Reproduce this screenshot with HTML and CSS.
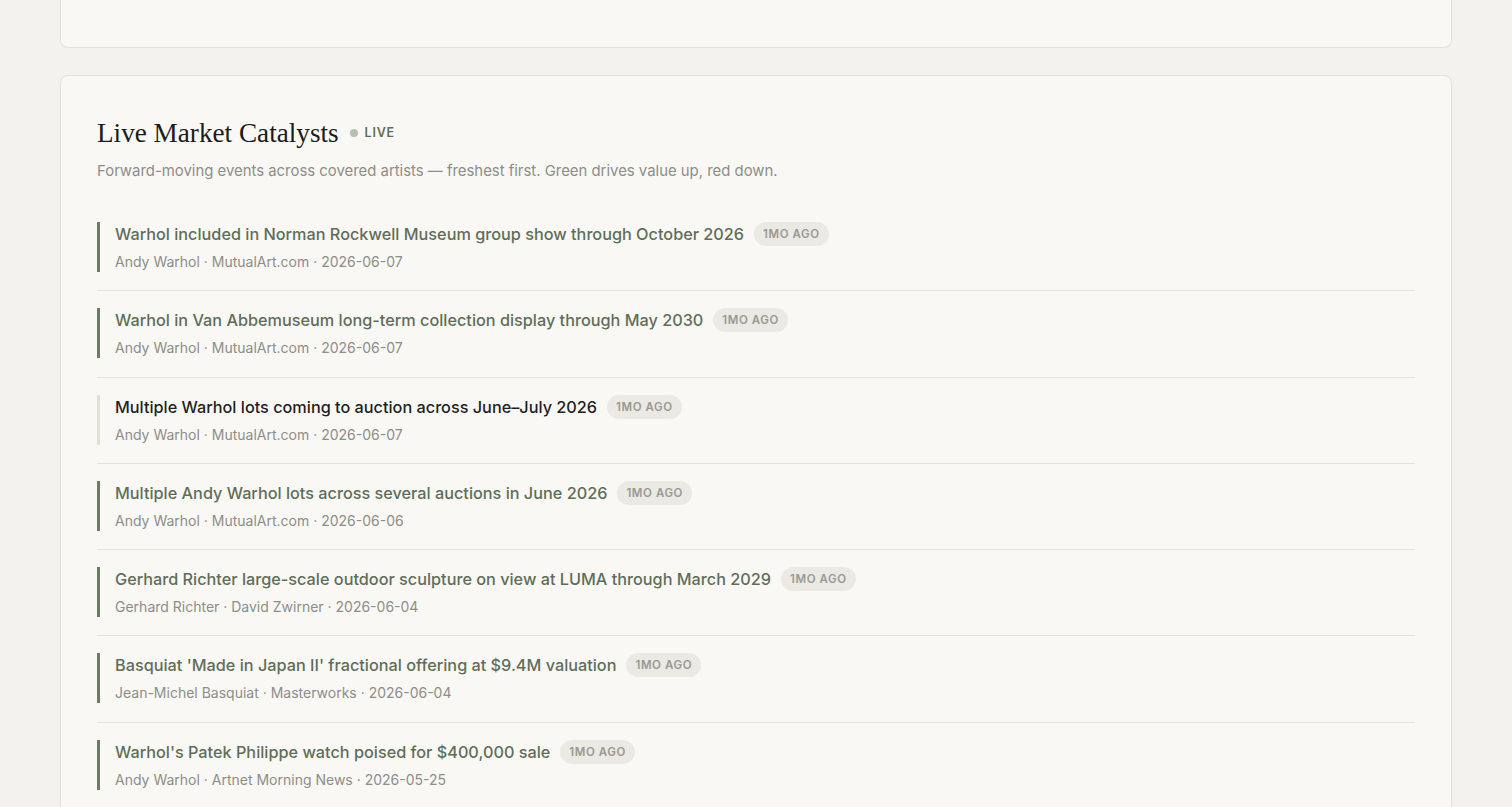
FILE: index.html
```html
<!DOCTYPE html>
<html lang="en">
<head>
  <meta charset="UTF-8">
  <title>Live Market Catalysts</title>
  <link rel="stylesheet" href="styles.css">
</head>
<body>
  <div class="page">
    <div class="card card-top"></div>

    <section class="card catalysts">
      <h2 class="title">Live Market Catalysts <span class="live"><span class="dot"></span>LIVE</span></h2>
      <p class="subtitle">Forward-moving events across covered artists — freshest first. Green drives value up, red down.</p>

      <ul class="events">
        <li class="event up">
          <div class="event-body">
            <div class="headline"><span>Warhol included in Norman Rockwell Museum group show through October 2026</span><span class="age">1mo ago</span></div>
            <div class="meta">Andy Warhol · MutualArt.com · 2026-06-07</div>
          </div>
        </li>
        <li class="event up">
          <div class="event-body">
            <div class="headline"><span>Warhol in Van Abbemuseum long-term collection display through May 2030</span><span class="age">1mo ago</span></div>
            <div class="meta">Andy Warhol · MutualArt.com · 2026-06-07</div>
          </div>
        </li>
        <li class="event neutral">
          <div class="event-body">
            <div class="headline"><span>Multiple Warhol lots coming to auction across June–July 2026</span><span class="age">1mo ago</span></div>
            <div class="meta">Andy Warhol · MutualArt.com · 2026-06-07</div>
          </div>
        </li>
        <li class="event up">
          <div class="event-body">
            <div class="headline"><span>Multiple Andy Warhol lots across several auctions in June 2026</span><span class="age">1mo ago</span></div>
            <div class="meta">Andy Warhol · MutualArt.com · 2026-06-06</div>
          </div>
        </li>
        <li class="event up">
          <div class="event-body">
            <div class="headline"><span>Gerhard Richter large-scale outdoor sculpture on view at LUMA through March 2029</span><span class="age">1mo ago</span></div>
            <div class="meta">Gerhard Richter · David Zwirner · 2026-06-04</div>
          </div>
        </li>
        <li class="event up">
          <div class="event-body">
            <div class="headline"><span>Basquiat 'Made in Japan II' fractional offering at $9.4M valuation</span><span class="age">1mo ago</span></div>
            <div class="meta">Jean-Michel Basquiat · Masterworks · 2026-06-04</div>
          </div>
        </li>
        <li class="event up">
          <div class="event-body">
            <div class="headline"><span>Warhol's Patek Philippe watch poised for $400,000 sale</span><span class="age">1mo ago</span></div>
            <div class="meta">Andy Warhol · Artnet Morning News · 2026-05-25</div>
          </div>
        </li>
      </ul>
    </section>
  </div>
</body>
</html>
```

FILE: styles.css
```css
body {
  margin: 0;
  background: #f3f2ee;
  font-family: Inter, "Noto Sans", sans-serif;
  color: #1f1f1c;
}
.page {
  padding: 0 60px 40px;
}
.card {
  background: #f9f8f5;
  border: 1px solid #e3e1db;
  border-radius: 8px;
}
.card-top {
  height: 47px;
  border-top: 0;
  border-radius: 0 0 8px 8px;
  margin-bottom: 27px;
}
.catalysts {
  padding: 37px 36px 36px;
}
.title {
  margin: 0;
  font-family: "Liberation Serif", serif;
  font-weight: 400;
  font-size: 27.2px;
  line-height: 40px;
  color: #1c1c1a;
  display: flex;
  align-items: center;
}
.live {
  display: inline-flex;
  align-items: center;
  margin-left: 11px;
  font-family: Inter, sans-serif;
  font-size: 12.5px;
  font-weight: 600;
  letter-spacing: 0.06em;
  color: #5f6e58;
}
.dot {
  width: 8px;
  height: 8px;
  border-radius: 50%;
  background: #b8bfb2;
  margin-right: 7px;
}
.subtitle {
  margin: 7px 0 0;
  font-size: 14.9px;
  line-height: 22px;
  color: #8e8d88;
}
.events {
  list-style: none;
  margin: 23px 0 0;
  padding: 0;
}
.event {
  padding: 17px 0 18.25px;
  border-bottom: 1px solid #e4e2dc;
}
.event-body {
  border-left: 3px solid #6b7c63;
  padding-left: 15px;
}
.event.neutral .event-body {
  border-left-color: #e2dfd7;
}
.headline {
  display: flex;
  align-items: center;
  gap: 10px;
  height: 24px;
  font-size: 16.25px;
  line-height: 24px;
  font-weight: 500;
  color: #5f6e58;
}
.event.neutral .headline {
  color: #1f1f1c;
}
.age {
  padding: 0 9px;
  height: 24px;
  line-height: 24px;
  border-radius: 12px;
  background: #ebe9e4;
  color: #9a9893;
  font-size: 11.5px;
  font-weight: 600;
  letter-spacing: 0.05em;
  text-transform: uppercase;
}
.meta {
  margin-top: 6px;
  font-size: 14px;
  line-height: 20px;
  color: #8e8d88;
}
```
